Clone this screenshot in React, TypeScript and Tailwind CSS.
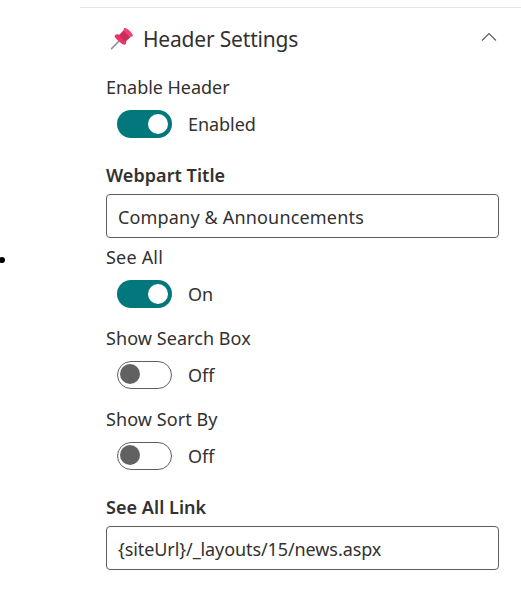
import type { ReactNode } from 'react';

function PushPin() {
  return (
    <svg className="-mt-1" width="24" height="24" viewBox="0 0 24 24" aria-hidden="true">
      <path d="M9.8 13.2 1.6 21.6" stroke="#9a8da0" strokeWidth="1.6" strokeLinecap="round" />
      <path d="M5 8.2C6.5 6.8 9.3 6.9 12.3 9.6C15.6 12.3 17.3 15.5 15.5 17.3C14.4 18.4 11.4 16.8 8.6 14C5.6 11.3 3.7 9.4 5 8.2Z" fill="#ea3568" />
      <path d="M9.2 7.9 13.8 3.1 20.6 9.9 15.8 14.5C14 13.5 10.5 10.5 9.2 7.9Z" fill="#c92d5c" />
      <path d="M14 1.3C15.1.3 17.4 1.6 19.6 3.8C21.8 6 23.5 8.4 22.5 9.5C21.6 10.5 19.2 9.3 16.8 7C14.6 4.7 12.9 2.4 14 1.3Z" fill="#f43f70" />
    </svg>
  );
}

function Toggle({ on, children }: { on?: boolean; children: ReactNode }) {
  return (
    <div className="mt-2 ml-[11px] flex h-7 items-center">
      <button
        role="switch"
        aria-checked={!!on}
        className={
          on
            ? 'flex h-7 w-[55px] items-center justify-end rounded-full bg-[#03787c] pr-1'
            : 'flex h-7 w-[55px] items-start rounded-full border border-[#605e5c] pt-[2px] pl-[2px]'
        }
      >
        <span className={on ? 'mb-px size-5 rounded-full bg-white' : 'size-5 rounded-full bg-[#616161]'} />
      </button>
      <span className="ml-4">{children}</span>
    </div>
  );
}

export default function App() {
  return (
    <div className="flex h-[596px] w-[521px] overflow-hidden bg-white font-['Noto_Sans',sans-serif] text-[18px] leading-[26px] whitespace-nowrap text-[#323130]">
      <div className="w-20 shrink-0 pt-[257px]">
        <div className="-ml-px size-[6px] rounded-full bg-black" />
      </div>
      <main className="mt-[7px] flex-1 border-t border-[#e5e5e5] pr-[22px] pl-[26px]">
        <header className="flex h-[66px] items-center pl-1">
          <PushPin />
          <h2 className="-mt-1 ml-[9px] text-[21px] leading-[30px] tracking-[-0.19px]">Header Settings</h2>
          <svg className="-mt-2 mr-[1px] ml-auto" width="18" height="12" viewBox="0 0 18 12" fill="none" stroke="#605e5c" strokeWidth="1.2">
            <path d="m2 9.5 7-7 7 7" />
          </svg>
        </header>
        <div className="h-[88px]">
          <div className="h-[28px]"><span className="tracking-[-0.03px]">Enable Header</span></div>
          <Toggle on><span className="tracking-[-0.05px]">Enabled</span></Toggle>
        </div>
        <div className="h-[82px]">
          <div className="h-8 font-semibold tracking-[0.05px]">Webpart Title</div>
          <div className="flex h-11 items-center rounded border border-[#605e5c] pt-0.5 pl-[11px]"><span className="tracking-[0.17px]">Company &amp; Announcements</span></div>
        </div>
        <div className="h-[81px]">
          <div className="h-[28px]"><span className="tracking-[0.2px]">See All</span></div>
          <Toggle on>On</Toggle>
        </div>
        <div className="h-[81px]">
          <div className="h-[28px]"><span className="tracking-[0.07px]">Show Search Box</span></div>
          <Toggle>Off</Toggle>
        </div>
        <div className="h-[88px]">
          <div className="h-[28px]"><span className="tracking-[0.08px]">Show Sort By</span></div>
          <Toggle>Off</Toggle>
        </div>
        <div>
          <div className="h-8 font-semibold tracking-[0.05px]">See All Link</div>
          <div className="flex h-11 items-center rounded border border-[#605e5c] pt-0.5 pl-[11px]"><span className="tracking-[-0.09px]">{'{siteUrl}/_layouts/15/news.aspx'}</span></div>
        </div>
      </main>
    </div>
  );
}
